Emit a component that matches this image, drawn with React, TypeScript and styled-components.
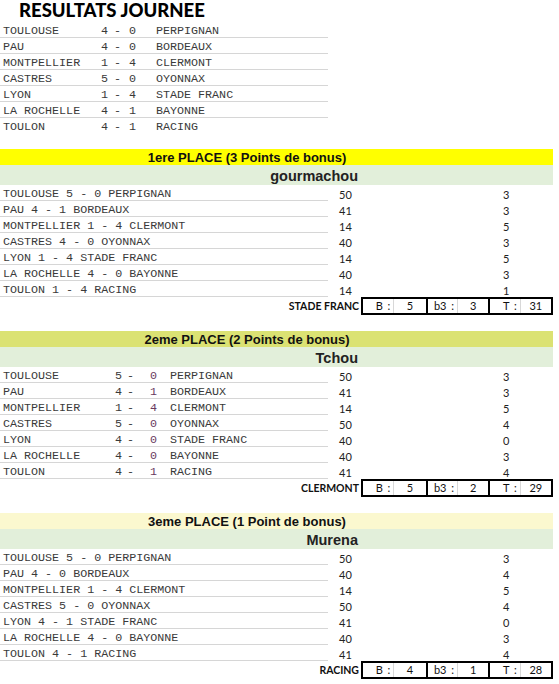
import React from 'react'
import styled, { createGlobalStyle } from 'styled-components'

const GlobalStyle = createGlobalStyle`
  html, body {
    margin: 0;
    padding: 0;
    background: #ffffff;
  }
`;

const Page = styled.div`
  width: 553px;
  display: flex;
  flex-direction: column;
`;

const Title = styled.h1`
  margin: 0;
  box-sizing: border-box;
  height: 22px;
  padding: 1px 0 0 19px;
  font-family: Lato, "Liberation Sans", sans-serif;
  font-weight: 900;
  font-size: 18.5px;
  line-height: 19px;
  color: #000;
`;

const DayTable = styled.div`
  display: flex;
  flex-direction: column;
  margin-bottom: 15px;
`;

const Line = styled.div`
  box-sizing: border-box;
  width: 328px;
  height: 16px;
  padding-top: 2px;
  border-bottom: 1px solid #d6d6d6;
  font-family: "Liberation Mono", "Courier New", monospace;
  font-size: 11.7px;
  line-height: 15px;
  color: #3a3a3a;
  white-space: pre;

  &:last-child {
    border-bottom-color: transparent;
  }
`;

const ScoreLine = styled(Line)<{ $cols: string }>`
  display: grid;
  grid-template-columns: ${({ $cols }) => $cols};
  padding-left: 3px;
`;

const Away = styled.span<{ $tint?: boolean }>`
  color: ${({ $tint }) => ($tint ? '#6a3a60' : 'inherit')};
`;

const Section = styled.section`
  display: flex;
  flex-direction: column;
  margin-bottom: 16px;
`;

const PlaceBar = styled.div<{ $bg: string }>`
  height: 16px;
  padding-right: 59px;
  background: ${({ $bg }) => $bg};
  font-family: "Liberation Sans", Arial, sans-serif;
  font-weight: 700;
  font-size: 13px;
  line-height: 17px;
  text-align: center;
  color: #111;
`;

const NameBar = styled.div`
  display: grid;
  grid-template-columns: 361px 1fr;
  height: 20px;
  background: #e2efda;
  font-family: "Liberation Sans", Arial, sans-serif;
  font-weight: 700;
  font-size: 14.5px;
  line-height: 22px;
  color: #222;
`;

const PlayerName = styled.span`
  text-align: right;
  padding-right: 3px;
`;

const PickRow = styled.div`
  display: grid;
  grid-template-columns: 339px 164px 1fr;
  height: 16px;

  &:last-child > div {
    border-bottom-color: transparent;
  }
`;

const MatchCell = styled(Line)`
  padding-left: 3px;
`;

const MatchGrid = styled(Line)`
  display: grid;
  grid-template-columns: 112px 12px 23px 20px 1fr;
  padding-left: 3px;
`;

const Value = styled.span`
  padding-top: 2px;
  font-family: Lato, "Liberation Sans", sans-serif;
  font-size: 11px;
  line-height: 15px;
  color: #222;
`;

const Footer = styled.div`
  display: grid;
  grid-template-columns: 361px 192px;
  height: 18px;
`;

const TeamLabel = styled.span`
  text-align: right;
  padding-right: 2px;
  font-family: Lato, "Liberation Sans", sans-serif;
  font-weight: 700;
  font-size: 10.5px;
  line-height: 18px;
  color: #111;
  white-space: nowrap;
`;

const Boxes = styled.div`
  display: grid;
  grid-template-columns: repeat(3, 1fr);
  box-sizing: border-box;
  border: 2px solid #000;
`;

const Box = styled.div`
  display: grid;
  grid-template-columns: 1fr 1fr;
  font-family: Lato, "Liberation Sans", sans-serif;
  font-size: 11px;
  line-height: 14px;
  color: #111;

  & + & {
    border-left: 2px solid #000;
  }
`;

const BoxLabel = styled.span`
  text-align: right;
  padding-right: 3px;
  border-right: 1px solid #d8d8d8;
  word-spacing: 2px;
`;

const BoxValue = styled.span`
  text-align: center;
`;

type Pick = [string, number, number, string, number, number];

interface PlaceData {
  bg: string;
  title: string;
  name: string;
  grid?: boolean;
  picks: Pick[];
  team: string;
  b: number;
  b3: number;
  t: number;
}

const day: [string, number, number, string][] = [
  ['TOULOUSE', 4, 0, 'PERPIGNAN'],
  ['PAU', 4, 0, 'BORDEAUX'],
  ['MONTPELLIER', 1, 4, 'CLERMONT'],
  ['CASTRES', 5, 0, 'OYONNAX'],
  ['LYON', 1, 4, 'STADE FRANC'],
  ['LA ROCHELLE', 4, 1, 'BAYONNE'],
  ['TOULON', 4, 1, 'RACING'],
];

const places: PlaceData[] = [
  {
    bg: '#ffff00',
    title: '1ere PLACE (3 Points de bonus)',
    name: 'gourmachou',
    picks: [
      ['TOULOUSE', 5, 0, 'PERPIGNAN', 50, 3],
      ['PAU', 4, 1, 'BORDEAUX', 41, 3],
      ['MONTPELLIER', 1, 4, 'CLERMONT', 14, 5],
      ['CASTRES', 4, 0, 'OYONNAX', 40, 3],
      ['LYON', 1, 4, 'STADE FRANC', 14, 5],
      ['LA ROCHELLE', 4, 0, 'BAYONNE', 40, 3],
      ['TOULON', 1, 4, 'RACING', 14, 1],
    ],
    team: 'STADE FRANC',
    b: 5,
    b3: 3,
    t: 31,
  },
  {
    bg: '#dbe273',
    title: '2eme PLACE (2 Points de bonus)',
    name: 'Tchou',
    grid: true,
    picks: [
      ['TOULOUSE', 5, 0, 'PERPIGNAN', 50, 3],
      ['PAU', 4, 1, 'BORDEAUX', 41, 3],
      ['MONTPELLIER', 1, 4, 'CLERMONT', 14, 5],
      ['CASTRES', 5, 0, 'OYONNAX', 50, 4],
      ['LYON', 4, 0, 'STADE FRANC', 40, 0],
      ['LA ROCHELLE', 4, 0, 'BAYONNE', 40, 3],
      ['TOULON', 4, 1, 'RACING', 41, 4],
    ],
    team: 'CLERMONT',
    b: 5,
    b3: 2,
    t: 29,
  },
  {
    bg: '#fbf8cf',
    title: '3eme PLACE (1 Point de bonus)',
    name: 'Murena',
    picks: [
      ['TOULOUSE', 5, 0, 'PERPIGNAN', 50, 3],
      ['PAU', 4, 0, 'BORDEAUX', 40, 4],
      ['MONTPELLIER', 1, 4, 'CLERMONT', 14, 5],
      ['CASTRES', 5, 0, 'OYONNAX', 50, 4],
      ['LYON', 4, 1, 'STADE FRANC', 41, 0],
      ['LA ROCHELLE', 4, 0, 'BAYONNE', 40, 3],
      ['TOULON', 4, 1, 'RACING', 41, 4],
    ],
    team: 'RACING',
    b: 4,
    b3: 1,
    t: 28,
  },
];

const Place: React.FC<{ data: PlaceData }> = ({ data }) => (
  <Section>
    <PlaceBar $bg={data.bg}>{data.title}</PlaceBar>
    <NameBar>
      <PlayerName>{data.name}</PlayerName>
    </NameBar>
    {data.picks.map(([home, s1, s2, away, pts, bonus]) => (
      <PickRow key={home}>
        {data.grid ? (
          <MatchGrid>
            <span>{home}</span>
            <span>{s1}</span>
            <span>-</span>
            <Away $tint>{s2}</Away>
            <span>{away}</span>
          </MatchGrid>
        ) : (
          <MatchCell>{`${home} ${s1} - ${s2} ${away}`}</MatchCell>
        )}
        <Value>{pts}</Value>
        <Value>{bonus}</Value>
      </PickRow>
    ))}
    <Footer>
      <TeamLabel>{data.team}</TeamLabel>
      <Boxes>
        <Box>
          <BoxLabel>B :</BoxLabel>
          <BoxValue>{data.b}</BoxValue>
        </Box>
        <Box>
          <BoxLabel>b3 :</BoxLabel>
          <BoxValue>{data.b3}</BoxValue>
        </Box>
        <Box>
          <BoxLabel>T :</BoxLabel>
          <BoxValue>{data.t}</BoxValue>
        </Box>
      </Boxes>
    </Footer>
  </Section>
);

const App: React.FC = () => {
  return (
    <>
      <GlobalStyle />
      <Page>
        <Title>RESULTATS JOURNEE</Title>
        <DayTable>
          {day.map(([home, s1, s2, away]) => (
            <ScoreLine key={home} $cols="98px 13px 15px 27px 1fr">
              <span>{home}</span>
              <span>{s1}</span>
              <span>-</span>
              <span>{s2}</span>
              <span>{away}</span>
            </ScoreLine>
          ))}
        </DayTable>
        {places.map((p) => (
          <Place key={p.name} data={p} />
        ))}
      </Page>
    </>
  );
};

export default App;
